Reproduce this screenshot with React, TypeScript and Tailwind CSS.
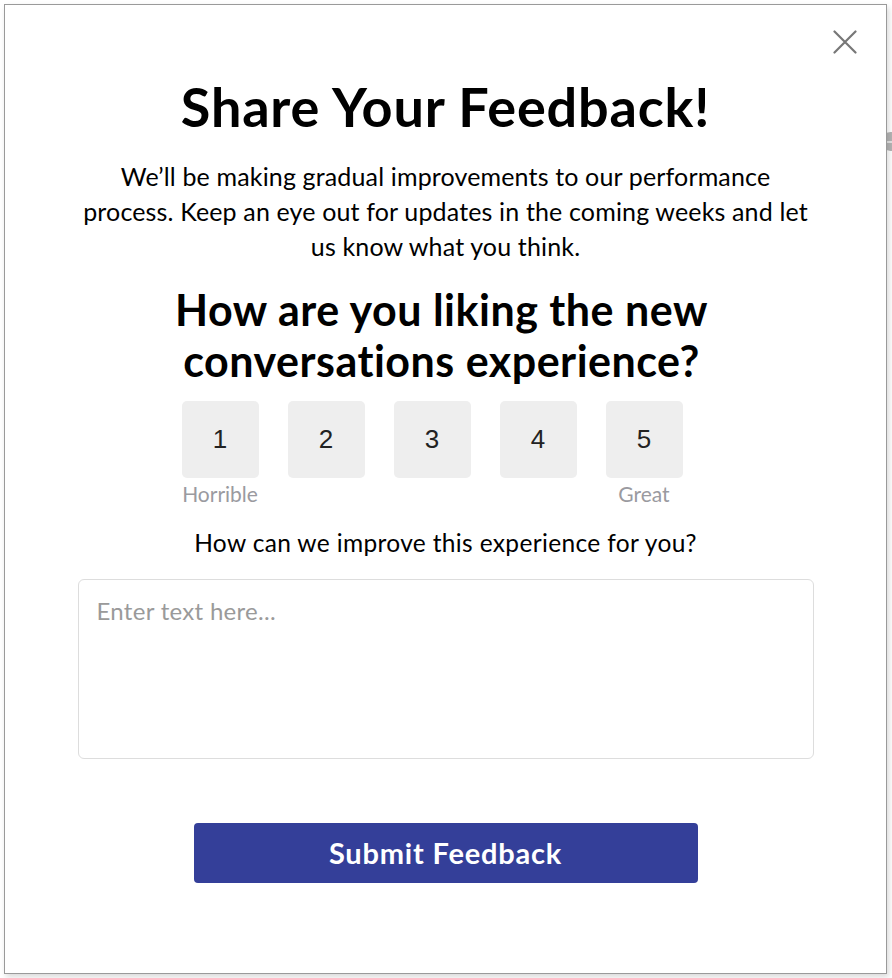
const ratings = [1, 2, 3, 4, 5];

export default function App() {
  return (
    <div className="relative w-[892px] h-[978px] bg-white overflow-hidden pt-[4px] pl-[4px]">
      {/* carousel arrow peeking out from behind the modal */}
      <div className="absolute left-[881px] top-[132px] w-[20px] h-[19px] rounded-full bg-[#b5b5b5] flex items-center">
        <div className="ml-[6px] w-[8px] h-[2px] bg-[#e5e5e5]" />
      </div>

      <div
        className="relative w-[883px] h-[970px] bg-white border border-[#9a9a9a] shadow-[2px_3px_6px_rgba(0,0,0,0.15)] flex flex-col items-center"
        style={{ fontFamily: 'Lato, "Open Sans", sans-serif' }}
      >
        <button className="absolute right-[29px] top-[25px] text-[#777]">
          <svg width="24" height="24" viewBox="0 0 24 24" fill="none" stroke="currentColor" strokeWidth={2.2} strokeLinecap="round">
            <path d="M1.5 1.5l21 21M22.5 1.5l-21 21" />
          </svg>
        </button>

        <h1 className="mt-[72px] text-[54px] leading-[60px] font-bold text-black tracking-[0.8px]">
          Share Your Feedback!
        </h1>

        <p className="mt-[22px] text-center text-[25px] leading-[35px] text-black tracking-[0.15px]">
          We’ll be making gradual improvements to our performance
          <br />
          process. Keep an eye out for updates in the coming weeks and let
          <br />
          us know what you think.
        </p>

        <h2 className="mt-[20px] mr-[8px] w-[600px] text-center text-[43px] leading-[51px] font-bold text-black tracking-[0.5px]">
          How are you liking the new conversations experience?
        </h2>

        <div className="mt-[15px] mr-[27px] flex gap-[29px]">
          {ratings.map((n) => (
            <div key={n} className="flex flex-col items-center">
              <button
                className="w-[77px] h-[77px] rounded-[5px] bg-[#eeeeee] text-[26px] text-[#222]"
                style={{ fontFamily: '"Liberation Sans", Arial, sans-serif' }}
              >
                {n}
              </button>
              <span className="mt-[3px] h-[26px] text-[21px] leading-[26px] text-[#9a9aa0] whitespace-nowrap">
                {n === 1 ? 'Horrible' : n === 5 ? 'Great' : ''}
              </span>
            </div>
          ))}
        </div>

        <p className="mt-[21px] text-[24.5px] leading-[30px] text-black tracking-[0.35px]">
          How can we improve this experience for you?
        </p>

        <textarea
          placeholder="Enter text here..."
          className="mt-[21px] w-[736px] h-[180px] resize-none rounded-[6px] border border-[#dddddd] px-[18px] py-[16px] text-[24px] leading-[30px] tracking-[0.3px] placeholder:text-[#9a9a9a] outline-none"
        />

        <button className="mt-[64px] w-[504px] h-[60px] rounded-[4px] bg-[#343f99] text-white text-[29px] font-bold tracking-[0.8px]">
          Submit Feedback
        </button>
      </div>
    </div>
  );
}
